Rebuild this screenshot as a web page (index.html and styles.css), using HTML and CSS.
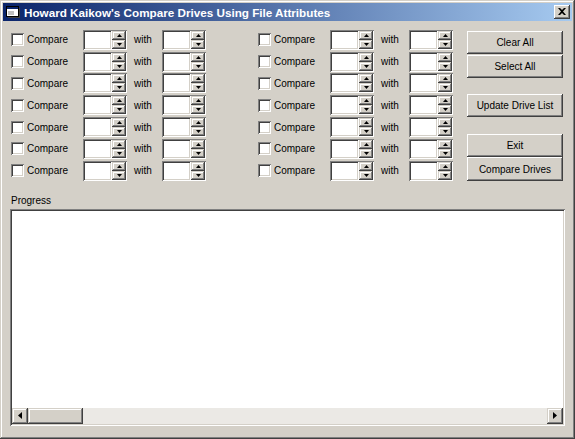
FILE: index.html
```html
<!DOCTYPE html>
<html>
<head>
<meta charset="utf-8">
<title>Howard Kaikow's Compare Drives Using File Attributes</title>
<link rel="stylesheet" href="styles.css">
</head>
<body>
<div class="window">
  <div class="titlebar">
    <svg class="app-icon" width="14" height="12" viewBox="0 0 14 12">
      <rect x="0.5" y="0.5" width="12" height="10" fill="#ffffff" stroke="#000000"/>
      <rect x="1" y="1" width="11" height="2" fill="#0a246a"/>
      <rect x="2" y="5" width="6" height="4" fill="#c0c0c0"/>
      <rect x="13" y="2" width="1" height="10" fill="#404040"/>
      <rect x="2" y="11" width="12" height="1" fill="#404040"/>
    </svg>
    <span class="title">Howard Kaikow's Compare Drives Using File Attributes</span>
    <div class="close">
      <svg width="8" height="7" viewBox="0 0 8 7">
        <path d="M0 0h2l2 2 2-2h2L5 3.5 8 7H6L4 5 2 7H0l3-3.5z" fill="#000"/>
      </svg>
    </div>
  </div>
  <div class="client">
    <div class="top">
      <div class="rows" id="rows"></div>
      <div class="buttons">
        <div class="btn b-clear">Clear All</div>
        <div class="btn b-select">Select All</div>
        <div class="btn b-update">Update Drive List</div>
        <div class="btn b-exit">Exit</div>
        <div class="btn b-compare">Compare Drives</div>
      </div>
    </div>
    <div class="progress-label">Progress</div>
    <div class="progress-box">
      <div class="progress-content"></div>
      <div class="hscroll">
        <div class="sbtn">
          <svg width="4" height="7" viewBox="0 0 4 7"><path d="M4 0v7L0 3.5z" fill="#000"/></svg>
        </div>
        <div class="thumb"></div>
        <div class="track"></div>
        <div class="sbtn">
          <svg width="4" height="7" viewBox="0 0 4 7"><path d="M0 0v7l4-3.5z" fill="#000"/></svg>
        </div>
      </div>
    </div>
  </div>
</div>
<script>
(function () {
  var rows = document.getElementById('rows');
  var spin = '<div class="spinbox"><div class="field"></div><div class="spinner">' +
    '<div class="sb"><svg width="5" height="3" viewBox="0 0 5 3"><path d="M2.5 0L5 3H0z" fill="#000"/></svg></div>' +
    '<div class="sb"><svg width="5" height="3" viewBox="0 0 5 3"><path d="M0 0h5L2.5 3z" fill="#000"/></svg></div>' +
    '</div></div>';
  var html = '';
  for (var i = 0; i < 14; i++) {
    html += '<div class="group"><div class="check"></div><span class="cap">Compare</span>' + spin +
      '<span class="with">with</span>' + spin + '</div>';
  }
  rows.innerHTML = html;
})();
</script>
</body>
</html>
```

FILE: styles.css
```css
* { box-sizing: border-box; }
html, body { margin: 0; padding: 0; }
body {
  font-family: "Liberation Sans", Arial, sans-serif;
  font-size: 10px;
  color: #000;
  background: #d4d0c8;
}
.window {
  width: 575px;
  height: 439px;
  background: #d4d0c8;
  padding: 3px;
  box-shadow: inset -1px -1px #404040, inset 1px 1px #d4d0c8, inset -2px -2px #808080, inset 2px 2px #ffffff;
  display: flex;
  flex-direction: column;
}
.titlebar {
  height: 18px;
  background: linear-gradient(to right, #0a246a, #a6caf0);
  display: flex;
  align-items: center;
  padding-left: 2px;
  padding-right: 2px;
}
.app-icon { margin-left: 1px; margin-right: 4px; }
.title {
  color: #fff;
  font-weight: bold;
  font-size: 11.7px;
  flex: 1;
  white-space: nowrap;
}
.close {
  width: 16px;
  height: 14px;
  background: #d4d0c8;
  box-shadow: inset -1px -1px #404040, inset 1px 1px #ffffff, inset -2px -2px #808080, inset 2px 2px #d4d0c8;
  display: flex;
  align-items: center;
  justify-content: center;
  padding-bottom: 1px;
}
.client {
  flex: 1;
  padding: 7px 7px 0 7px;
  display: flex;
  flex-direction: column;
}
.top { display: flex; align-items: flex-start; }
.rows {
  margin-left: 1px;
  margin-top: 1px;
  display: grid;
  grid-template-columns: 195px 195px;
  column-gap: 52px;
  grid-auto-rows: 21.8px;
}
.group { display: flex; align-items: center; }
.check {
  width: 13px;
  height: 13px;
  background: #fff;
  box-shadow: inset 1px 1px #808080, inset -1px -1px #ffffff, inset 2px 2px #404040, inset -2px -2px #d4d0c8;
}
.cap { margin-left: 3px; width: 56px; white-space: nowrap; }
.with { margin-left: 7px; width: 28px; }
.spinbox { display: flex; width: 44px; height: 20px; }
.field {
  width: 29px;
  height: 20px;
  background: #fff;
  box-shadow: inset 1px 1px #808080, inset -1px -1px #ffffff, inset 2px 2px #404040, inset -2px -2px #d4d0c8;
}
.spinner {
  width: 15px;
  height: 20px;
  display: flex;
  flex-direction: column;
  padding: 1px 1px 1px 0;
  box-shadow: inset 0 1px #808080, inset -1px -1px #ffffff, inset 0 2px #404040, inset -2px -2px #d4d0c8;
}
.sb {
  flex: 1;
  background: #d4d0c8;
  box-shadow: inset -1px -1px #404040, inset 1px 1px #d4d0c8, inset -2px -2px #808080, inset 2px 2px #ffffff;
  display: flex;
  align-items: center;
  justify-content: center;
}
.sb svg { display: block; }
.buttons {
  margin-left: 14px;
  width: 96px;
  display: flex;
  flex-direction: column;
}
.btn {
  height: 23px;
  background: #d4d0c8;
  box-shadow: inset -1px -1px #404040, inset 1px 1px #ffffff, inset -2px -2px #808080, inset 2px 2px #d4d0c8;
  display: flex;
  align-items: center;
  justify-content: center;
  white-space: nowrap;
}
.b-clear { margin-top: 3px; }
.b-select { margin-top: 1px; }
.b-update { margin-top: 16px; }
.b-exit { margin-top: 17px; }
.b-compare { height: 24px; }
.progress-label {
  margin-top: 13px;
  line-height: 12px;
  height: 12px;
  padding-left: 1px;
}
.progress-box {
  margin-top: 2px;
  height: 217px;
  padding: 2px;
  background: #fff;
  box-shadow: inset 1px 1px #808080, inset -1px -1px #ffffff, inset 2px 2px #404040, inset -2px -2px #d4d0c8;
  display: flex;
  flex-direction: column;
}
.progress-content { flex: 1; }
.hscroll {
  height: 16px;
  display: flex;
  background: #ebe9e5;
}
.sbtn {
  width: 16px;
  height: 16px;
  background: #d4d0c8;
  box-shadow: inset -1px -1px #404040, inset 1px 1px #d4d0c8, inset -2px -2px #808080, inset 2px 2px #ffffff;
  display: flex;
  align-items: center;
  justify-content: center;
}
.thumb {
  width: 55px;
  height: 16px;
  background: #d4d0c8;
  box-shadow: inset -1px -1px #404040, inset 1px 1px #d4d0c8, inset -2px -2px #808080, inset 2px 2px #ffffff;
}
.track { flex: 1; }
```
